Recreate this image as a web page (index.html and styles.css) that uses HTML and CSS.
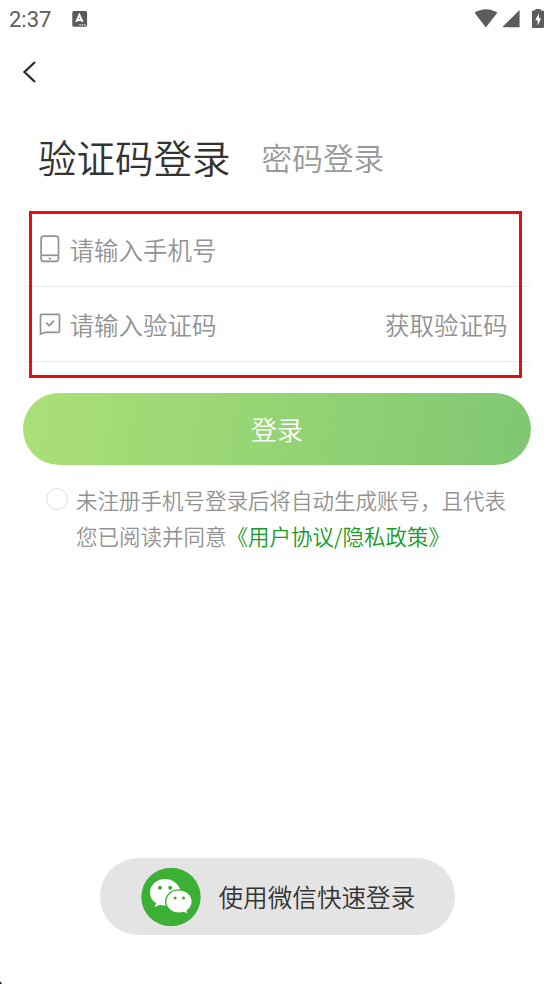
FILE: index.html
```html
<!DOCTYPE html>
<html lang="zh-CN">
<head>
<meta charset="utf-8">
<title>验证码登录</title>
<link rel="stylesheet" href="styles.css">
</head>
<body>
<div class="screen">
  <header class="status">
    <span class="time">2:37</span>
    <svg class="keyboard" width="16" height="16" viewBox="0 0 16 16"><rect x=".3" y=".1" width="14.800" height="15.600" rx="1.600" fill="#595959"/><path d="M4.200 10.800 7.400 3.900l3.200 6.900M5.300 8.900h4.200" fill="none" stroke="#fff" stroke-width="2"/><path d="M7.400 13.800h1.400m1 0h1.400m1 0h1.400" stroke="#fff" stroke-width="1.200"/></svg>
    <div class="indicators">
      <svg width="24" height="20" viewBox="0 0 24 20"><path d="M.6 3.800C7-.9 17-.9 23.400 3.800L12.200 17.900q-.4.4-.8 0z" fill="#5c5c5c"/></svg>
      <svg width="18" height="20" viewBox="0 0 18 20"><path d="M17.600 1v17.300H1.200q-1-.1-.3-.9z" fill="#5c5c5c"/></svg>
      <svg width="12" height="20" viewBox="0 0 12 20"><path d="M3.300 0h5.400v1.500H11q1 0 1 1v15.600q0 1-1 1H1q-1 0-1-1V2.500q0-1 1-1h2.300z" fill="#5c5c5c"/><path d="M7 4.300 3.200 11.200H5.600V16.500L9.200 9.200H7z" fill="#fff"/></svg>
    </div>
  </header>
  <nav class="back">
    <svg width="16" height="24" viewBox="0 0 16 24"><path d="M13 2 2.500 12 13 22" fill="none" stroke="#2b2b2b" stroke-width="2.300"/></svg>
  </nav>
  <div class="tabs">
    <h1 class="tab-active">验证码登录</h1>
    <span class="tab">密码登录</span>
  </div>
  <section class="form">
    <div class="row">
      <svg class="field-icon" width="24" height="28" viewBox="0 0 24 28" fill="none" stroke="#929292" stroke-width="1.700"><rect x="3.100" y="1.200" width="17.400" height="25.200" rx="2.600"/><path d="M3.300 20.300h17"/><path d="M10.700 23.600h2.200" stroke-width="2"/></svg>
      <span class="placeholder">请输入手机号</span>
    </div>
    <div class="row">
      <svg class="field-icon" width="24" height="24" viewBox="0 0 24 24" fill="none" stroke="#929292" stroke-width="1.700"><path d="M3.900 2.300h16.300q1.300 0 1.300 1.300v15.400q0 1.300-1.300 1.300H7.400L2.500 22V3.600Q2.500 2.300 3.900 2.300z"/><path d="m8.100 10.700 3.200 2.900 4.700-4.900"/></svg>
      <span class="placeholder">请输入验证码</span>
      <span class="send">获取验证码</span>
    </div>
    <div class="highlight"></div>
  </section>
  <div class="login">登录</div>
  <div class="terms">
    <span class="radio"></span>
    <p>未注册手机号登录后将自动生成账号，且代表<br>您已阅读并同意<span class="link">《用户协议/隐私政策》</span></p>
  </div>
  <div class="wechat">
    <svg width="60" height="60" viewBox="0 0 60 60"><ellipse cx="30" cy="30" rx="29.700" ry="29.300" fill="#3cb034"/><path d="M24 12C15.500 12 9 18 9 25.500c0 4.700 2.400 8.300 6.200 10.800L13.500 40l5.600-2.300c2.500.8 5.200 1 8 .7C42 37 43 27 37 18.500 33.500 14 29 12 24 12z" fill="#fff"/><path d="M38 22.900c-7.600 0-13.300 5.100-13.300 11.600S30.400 46.100 38 46.100c1.700 0 3.300-.2 4.700-.7l5 2.400-1.500-4c3.200-2.100 5.100-5.500 5.100-9.300 0-6.500-5.700-11.600-13.300-11.600z" fill="#fff" stroke="#3cb034" stroke-width="1.400"/><g fill="#3cb034"><circle cx="19" cy="20.700" r="2"/><circle cx="29.200" cy="20.700" r="2"/><circle cx="34" cy="31" r="1.600"/><circle cx="42.500" cy="31" r="1.600"/></g></svg>
    <span class="wechat-label">使用微信快速登录</span>
  </div>
  <div class="corner"></div>
</div>
</body>
</html>
```
FILE: styles.css
```css
* { box-sizing: border-box; }
body {
  margin: 0;
  background: #fff;
  color: #333;
  font-family: "Noto Sans CJK SC", sans-serif;
  font-weight: 350;
}
svg { display: block; flex: none; }
.screen {
  position: relative;
  display: flex;
  flex-direction: column;
  width: 554px;
  height: 984px;
  overflow: hidden;
}
.status {
  display: flex;
  align-items: center;
  height: 38px;
  padding: 0 10px 0 9px;
}
.time {
  width: 63px;
  padding-top: 1px;
  color: #5c5c5c;
  font: 400 22px/38px Roboto, sans-serif;
}
.indicators {
  display: flex;
  gap: 4px;
  margin-left: auto;
}
.indicators svg:last-child { margin-left: 8px; }
.back {
  display: flex;
  align-items: center;
  height: 68px;
  padding-left: 22px;
}
.tabs {
  display: flex;
  align-items: center;
  gap: 31px;
  height: 105px;
  padding: 0 0 3px 38px;
}
.tab-active {
  margin: 0;
  padding-bottom: 2px;
  font-size: 38.500px;
  font-weight: 350;
  line-height: 56px;
}
.tab {
  color: #999;
  font-size: 30.700px;
  line-height: 46px;
}
.form {
  position: relative;
  height: 151px;
  margin: 0 23px;
}
.row {
  display: flex;
  align-items: center;
  height: 75px;
  padding: 0 23.500px 0 15px;
  border-bottom: 1px solid #ebebeb;
  color: #929292;
  font-size: 24.500px;
  line-height: 36px;
}
.row:first-child { height: 76px; }
.field-icon { margin-right: 7.500px; }
.placeholder, .send { padding-top: 2px; }
.send { margin-left: auto; }
.highlight {
  position: absolute;
  top: 0;
  left: 6px;
  width: 493px;
  height: 167px;
  border: 3px solid #e60f10;
}
.login {
  height: 72px;
  margin: 31px 23px 0;
  border-radius: 36px;
  background: linear-gradient(100deg, #abe076, #80c773);
  color: #fff;
  font-size: 26px;
  line-height: 72px;
  text-align: center;
}
.terms {
  display: flex;
  gap: 8px;
  margin-top: 17px;
  padding-left: 46px;
  color: #929292;
  font-size: 21.500px;
  line-height: 36px;
}
.terms p { margin: 0; white-space: nowrap; }
.radio {
  flex: none;
  width: 22px;
  height: 22px;
  margin-top: 6px;
  border: 1px solid #ddd;
  border-radius: 50%;
}
.link { color: #179b24; }
.wechat {
  display: flex;
  align-items: center;
  gap: 18px;
  width: 355px;
  height: 77px;
  margin: auto 0 49px 99.500px;
  padding-left: 41px;
  border-radius: 39px;
  background: #e4e4e4;
  font-size: 24.600px;
  line-height: 36px;
}
.wechat-label { padding-bottom: 2px; }
.corner {
  position: absolute;
  bottom: 0;
  left: 0;
  width: 2px;
  height: 3px;
  background: #17222b;
  clip-path: polygon(0 0, 100% 100%, 0 100%);
}
```
